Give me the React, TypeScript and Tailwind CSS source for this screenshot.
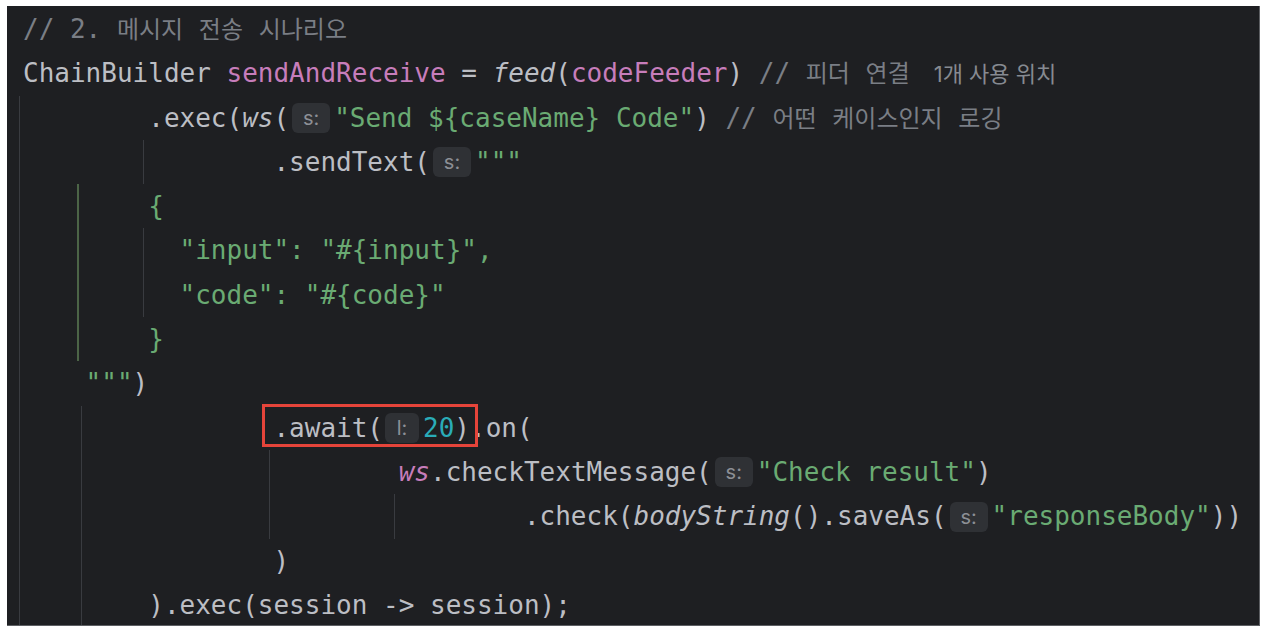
import React from "react";

const mono = { fontFamily: '"DejaVu Sans Mono", "Noto Sans CJK KR", monospace' };
const kr = { fontFamily: '"Noto Sans CJK KR", sans-serif' };
const ui = { fontFamily: 'Inter, "Noto Sans CJK KR", sans-serif' };

const D = ({ children }: { children: React.ReactNode }) => <span className="text-[#bcbec4]">{children}</span>;
const P = ({ children }: { children: React.ReactNode }) => <span className="text-[#c77dbb]">{children}</span>;
const G = ({ children }: { children: React.ReactNode }) => <span className="text-[#6aab73]">{children}</span>;
const Cm = ({ children }: { children: React.ReactNode }) => <span className="text-[#7a7e85]">{children}</span>;
const I = ({ children, purple }: { children: React.ReactNode; purple?: boolean }) => (
  <span className={purple ? "italic text-[#c77dbb]" : "italic text-[#bcbec4]"}>{children}</span>
);
const K = ({ children }: { children: React.ReactNode }) => (
  <span className="text-[24px] leading-[30px]" style={kr}>{children}</span>
);

const Inlay = ({ label }: { label: string }) => (
  <span
    className={
      (label === "l:" ? "ml-[2px] mr-[4px] w-[34px] " : "ml-[3px] mr-[4px] w-[38px] ") +
      "inline-block align-middle relative -top-[1px] h-[30px] rounded-[6px] bg-[#2f3135] text-[#8c8f95] text-[20px] leading-[30px] text-center"
    }
    style={ui}
  >
    {label}
  </span>
);

type GuideKind = "g0" | "g4" | "g8" | "g16" | "g24" | "green";
const guideClass: Record<GuideKind, string> = {
  g0: "absolute top-0 bottom-0 left-[12px] w-px bg-[#393b40]",
  g4: "absolute top-0 bottom-0 left-[74px] w-px bg-[#393b40]",
  g8: "absolute top-0 bottom-0 left-[136px] w-px bg-[#393b40]",
  g16: "absolute top-0 bottom-0 left-[262px] w-px bg-[#393b40]",
  g24: "absolute top-0 bottom-0 left-[387px] w-px bg-[#393b40]",
  green: "absolute top-0 bottom-0 left-[70px] w-[2px] bg-[#4c6447]",
};

const Line = ({ guides = [], children }: { guides?: GuideKind[]; children: React.ReactNode }) => (
  <div className="relative h-[44.3px] leading-[44.3px] whitespace-pre pl-[16px]">
    {guides.map((g) => (
      <span key={g} className={guideClass[g]} />
    ))}
    <span className="relative">{children}</span>
  </div>
);

export default function App() {
  return (
    <div className="w-[1274px] h-[640px] bg-white pl-[7px] pt-[6px]">
      <div
        className="relative w-[1253px] h-[620px] bg-[#1e1f22] border-r border-b border-[#5d5f63] pt-[1px] text-[26px] text-[#bcbec4] overflow-hidden"
        style={mono}
      >
        <Line>
          <Cm>
            {"// 2. "}
            <K>메시지</K> <K>전송</K> <K>시나리오</K>
          </Cm>
        </Line>
        <Line>
          <D>{"ChainBuilder "}</D>
          <P>sendAndReceive</P>
          <D>{" = "}</D>
          <I>feed</I>
          <D>(</D>
          <P>codeFeeder</P>
          <D>{") "}</D>
          <Cm>
            {"// "}
            <K>피더</K> <K>연결</K>
          </Cm>
          <span className="ml-[24px] text-[22px] leading-[30px] text-[#868a91]" style={ui}>
            1개 사용 위치
          </span>
        </Line>
        <Line guides={["g0"]}>
          <D>{"        .exec("}</D>
          <I>ws</I>
          <D>(</D>
          <Inlay label="s:" />
          <G>{'"Send ${caseName} Code"'}</G>
          <D>{") "}</D>
          <Cm>
            {"// "}
            <K>어떤</K> <K>케이스인지</K> <K>로깅</K>
          </Cm>
        </Line>
        <Line guides={["g0", "g8"]}>
          <D>{"                .sendText("}</D>
          <Inlay label="s:" />
          <G>{'"""'}</G>
        </Line>
        <Line guides={["g0", "green"]}>
          <G>{"        {"}</G>
        </Line>
        <Line guides={["g0", "green", "g8"]}>
          <G>{'          "input": "#{input}",'}</G>
        </Line>
        <Line guides={["g0", "green", "g8"]}>
          <G>{'          "code": "#{code}"'}</G>
        </Line>
        <Line guides={["g0", "green"]}>
          <G>{"        }"}</G>
        </Line>
        <Line guides={["g0"]}>
          <G>{'    """'}</G>
          <D>)</D>
        </Line>
        <Line guides={["g0", "g4"]}>
          <D>{"                .await("}</D>
          <Inlay label="l:" />
          <span className="text-[#2aacb8]">20</span>
          <D>).on(</D>
        </Line>
        <Line guides={["g0", "g4", "g16"]}>
          <D>{"                        "}</D>
          <I purple>ws</I>
          <D>.checkTextMessage(</D>
          <Inlay label="s:" />
          <G>{'"Check result"'}</G>
          <D>)</D>
        </Line>
        <Line guides={["g0", "g4", "g16", "g24"]}>
          <D>{"                                .check("}</D>
          <I>bodyString</I>
          <D>().saveAs(</D>
          <Inlay label="s:" />
          <G>{'"responseBody"'}</G>
          <D>))</D>
        </Line>
        <Line guides={["g0", "g4"]}>
          <D>{"                )"}</D>
        </Line>
        <Line guides={["g0", "g4"]}>
          <D>{"        ).exec(session -> session);"}</D>
        </Line>

        <div className="absolute left-[255px] top-[398px] w-[216px] h-[43px] border-[3px] border-[#e5443a] pointer-events-none" />
      </div>
    </div>
  );
}
